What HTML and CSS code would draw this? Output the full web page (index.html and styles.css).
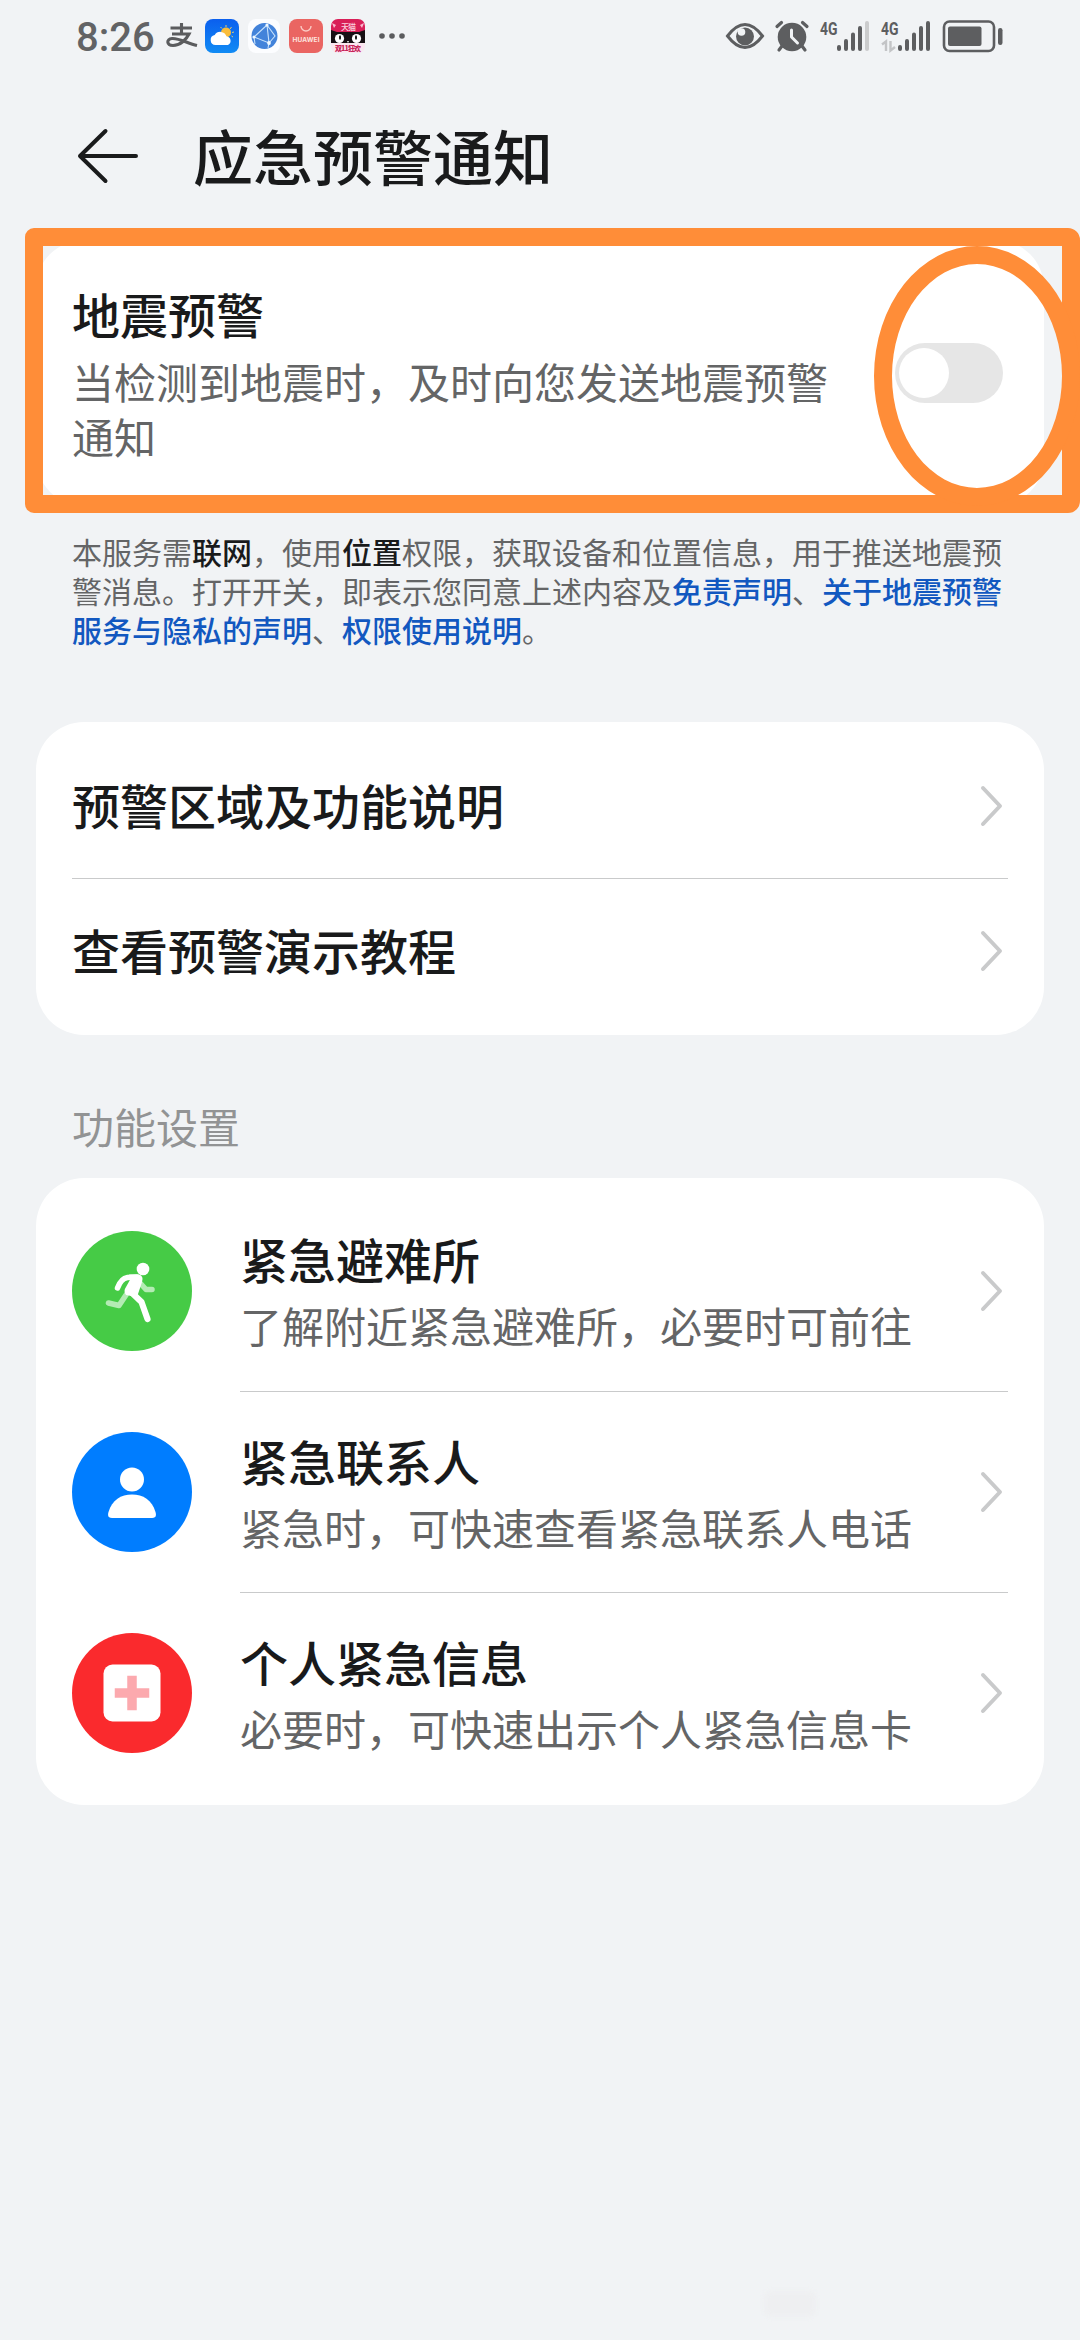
FILE: index.html
```html
<!DOCTYPE html>
<html lang="zh-CN">
<head>
<meta charset="utf-8">
<title>应急预警通知</title>
<link rel="stylesheet" href="styles.css">
</head>
<body>
<div class="screen">
  <div class="status">
    <span class="clock">8:26</span>
    <svg class="pay" width="32" height="28" viewBox="0 0 32 28" fill="none" stroke="#5b5c5e" stroke-width="3.100"><path d="M4.500 6H26M15.500 1V11.500M6 12H23C20 18 14 23.500 7 23.500C0.500 23.500 0 17 6 16.500C13 16 21 21 31 23.500"/></svg>
    <svg class="app" width="34" height="34" viewBox="0 0 34 34">
      <defs><linearGradient id="sky" x1="0" y1="0" x2="0" y2="1"><stop offset="0" stop-color="#0b5fee"/><stop offset="1" stop-color="#118bf4"/></linearGradient></defs>
      <rect width="34" height="34" rx="8" fill="url(#sky)"/>
      <path d="M21 6V8M26.500 8L25 10M29 13L27 13.500M15.500 8L17 9.500M28 18L26.500 17" stroke="#e9ca6b" stroke-width="1"/>
      <circle cx="21" cy="13.500" r="5" fill="#f9bd3c"/>
      <path d="M10.500 26a5 5 0 0 1-.8-9.900 6.500 6.500 0 0 1 11.800 1.200 4.600 4.600 0 0 1 1.500 8.700z" fill="#fff"/>
    </svg>
    <svg class="app" width="34" height="34" viewBox="0 0 34 34">
      <rect x="1" width="32" height="34" rx="8" fill="#fcfdff"/>
      <circle cx="17.500" cy="17" r="13" fill="#4383da"/>
      <g fill="none" stroke="#c8e2fc" stroke-width="1.100"><path d="M20 6L7 18L22 24ZM20 6L28 17L22 24M7 18L8 25M22 24L21 29"/></g>
      <g fill="#eff8ff"><circle cx="20" cy="6" r="1.600"/><circle cx="7" cy="18" r="1.600"/><circle cx="22" cy="24" r="1.900"/></g>
    </svg>
    <svg class="app" width="34" height="34" viewBox="0 0 34 34">
      <rect width="34" height="34" rx="8" fill="#ea6562"/>
      <path d="M12 7a5 5 0 0 0 10 0" fill="none" stroke="#fbcac4" stroke-width="1.400"/>
      <text x="3.500" y="22.500" textLength="27" class="brand">HUAWEI</text>
    </svg>
    <svg class="app" width="34" height="34" viewBox="0 0 34 34">
      <rect width="34" height="34" rx="7" fill="#fbe6ef"/>
      <path d="M0 13V7a7 7 0 0 1 7-7H27a7 7 0 0 1 7 7V13Z" fill="#d91f58"/>
      <path d="M3 9L1 4L5 6ZM31 9L33 4L29 6Z" fill="#f9b9cd"/>
      <path d="M0 11L6 13H28L34 11V24H0Z" fill="#171014"/>
      <circle cx="8.500" cy="19.500" r="4.600" fill="#fff"/><circle cx="25.500" cy="19.500" r="4.600" fill="#fff"/>
      <ellipse cx="9" cy="18.500" rx="1" ry="2.300" fill="#111"/><ellipse cx="25" cy="18.500" rx="1" ry="2.300" fill="#111"/>
      <path d="M16 22h2l-1 2z" fill="#fff"/>
      <text x="10" y="10.500" textLength="15" class="cat-top">天猫</text>
      <text x="4" y="32" textLength="26" class="cat-bottom">双11狂欢</text>
    </svg>
    <svg class="more" width="28" height="8" viewBox="0 0 28 8" fill="#5b5c5e"><circle cx="4" cy="4" r="2.800"/><circle cx="14" cy="4" r="2.800"/><circle cx="24" cy="4" r="2.800"/></svg>
    <svg class="tray" width="280" height="36" viewBox="724 18 280 36">
      <path d="M726.500 36Q744 13 761.500 36Q744 59 726.500 36Z" fill="none" stroke="#5d5e60" stroke-width="3"/>
      <circle cx="744" cy="36.500" r="9" fill="#5d5e60"/><circle cx="740.500" cy="32" r="3.800" fill="#f1f3f5"/>
      <circle cx="791" cy="37" r="14.300" fill="#5d5e60"/>
      <path d="M776 26.500L780.500 22.500M806 26.500L801.500 22.500M781 46L778 50M801 46L804 50" stroke="#5d5e60" stroke-width="3.200" stroke-linecap="round"/>
      <path d="M790.500 30V37L796.500 43" fill="none" stroke="#f1f3f5" stroke-width="3" stroke-linecap="round" stroke-linejoin="round"/>
      <text x="819" y="34.500" textLength="17.500" lengthAdjust="spacingAndGlyphs" class="net">4G</text>
      <g stroke="#5d5e60" stroke-width="4" stroke-linecap="round"><path d="M838 47V49M845 41V49M852 34.500V49M859 28V49"/><path d="M866 23V49" stroke="#cbcccd"/></g>
      <text x="880" y="34.500" textLength="17.500" lengthAdjust="spacingAndGlyphs" class="net">4G</text>
      <path d="M881 44.500L885 41.500V51M889.500 41V50.500L894 47" fill="none" stroke="#c3c4c6" stroke-width="2.400"/>
      <path d="M899 47V49M906 41V49M913 34.500V49M920 28V49M927 23V49" stroke="#5d5e60" stroke-width="4" stroke-linecap="round"/>
      <rect x="943" y="21.500" width="50" height="29.500" rx="5.500" fill="none" stroke="#5d5e60" stroke-width="2.600"/>
      <rect x="947" y="26.500" width="33.500" height="19.500" rx="2" fill="#5d5e60"/>
      <rect x="997" y="28" width="4.500" height="17" rx="2.200" fill="#5d5e60"/>
    </svg>
  </div>

  <header class="header">
    <svg width="62" height="56" viewBox="0 0 62 56" fill="none" stroke="#1a1b1c" stroke-width="4" stroke-linecap="round" stroke-linejoin="round"><path d="M59 28H3M28.500 3L3 28L28.500 53"/></svg>
    <h1>应急预警通知</h1>
  </header>

  <section class="card quake">
    <div class="quake-text">
      <h2>地震预警</h2>
      <p>当检测到地震时，及时向您发送地震预警通知</p>
    </div>
    <span class="switch"><span class="knob"></span></span>
    <span class="mark-box"></span>
    <span class="mark-ring"></span>
  </section>

  <p class="notice">本服务需<b>联网</b>，使用<b>位置</b>权限，获取设备和位置信息，用于推送地震预警消息。打开开关，即表示您同意上述内容及<a>免责声明</a>、<a>关于地震预警服务与隐私的声明</a>、<a>权限使用说明</a>。</p>

  <section class="card links">
    <div class="row"><h2>预警区域及功能说明</h2><svg class="chev" width="24" height="42" viewBox="0 0 24 42"><path d="M3 3L20 21L3 39"/></svg></div>
    <div class="row ruled"><h2>查看预警演示教程</h2><svg class="chev" width="24" height="42" viewBox="0 0 24 42"><path d="M3 3L20 21L3 39"/></svg></div>
  </section>

  <h3 class="label">功能设置</h3>

  <section class="card features">
    <div class="feature">
      <svg width="120" height="120" viewBox="0 0 120 120"><circle cx="60" cy="60" r="60" fill="#46cb46"/>
        <g fill="none" stroke-linecap="round" stroke-linejoin="round"><path d="M54 64L47 74.500L36.500 72M69 53L74 58.500H80" stroke="#b4ebb4" stroke-width="5.500"/><path d="M65 46L55.500 46.500Q49 47.500 45.500 57" stroke="#fff" stroke-width="5.500"/><path d="M59 61L69.500 71L75.500 88" stroke="#fff" stroke-width="6.200"/></g>
        <path d="M57 43.500H67Q72 45 70 51L65 66L54 64Q51 60 54 56L59 47Z" fill="#fff"/><circle cx="71" cy="38" r="6.300" fill="#fff"/></svg>
      <div class="body"><div class="words"><h2>紧急避难所</h2><p>了解附近紧急避难所，必要时可前往</p></div><svg class="chev" width="24" height="42" viewBox="0 0 24 42"><path d="M3 3L20 21L3 39"/></svg></div>
    </div>
    <div class="feature">
      <svg width="120" height="120" viewBox="0 0 120 120"><circle cx="60" cy="60" r="60" fill="#007dff"/><g fill="#fff"><circle cx="60" cy="47.500" r="12"/><path d="M40 86C35 86 36 82 36.500 80C40 68 49 62.500 60 62.500S80 68 83.500 80C84 82 85 86 80 86Z"/></g></svg>
      <div class="body ruled"><div class="words"><h2>紧急联系人</h2><p>紧急时，可快速查看紧急联系人电话</p></div><svg class="chev" width="24" height="42" viewBox="0 0 24 42"><path d="M3 3L20 21L3 39"/></svg></div>
    </div>
    <div class="feature">
      <svg width="120" height="120" viewBox="0 0 120 120"><circle cx="60" cy="60" r="60" fill="#fa2a2d"/><rect x="31.500" y="31.500" width="57" height="57" rx="9" fill="#fff"/><path d="M60 47.500V72.500M47.500 60H72.500" stroke="#fca9ae" stroke-width="9.500" stroke-linecap="square"/></svg>
      <div class="body ruled"><div class="words"><h2>个人紧急信息</h2><p>必要时，可快速出示个人紧急信息卡</p></div><svg class="chev" width="24" height="42" viewBox="0 0 24 42"><path d="M3 3L20 21L3 39"/></svg></div>
    </div>
  </section>
  <div class="smudge"></div>
</div>
</body>
</html>
```
FILE: styles.css
```css
* { box-sizing: border-box; margin: 0; padding: 0; }
body { background: #f1f3f5; }
.screen {
  width: 1080px; height: 2340px; overflow: hidden;
  display: flex; flex-direction: column;
  background: #f1f3f5; color: #191a1b;
  font-family: "Noto Sans CJK SC", sans-serif;
}
h1, h2 { font-weight: 500; white-space: nowrap; }
h2 { font-size: 48px; line-height: 64px; }
p { color: #646566; }

.status { height: 72px; display: flex; align-items: center; padding: 0 75px 0 76px; }
.clock { width: 90px; font: 500 40px/72px Roboto, sans-serif; color: #626365; padding-top: 4px; }
.pay { margin-right: 7px; }
.app { margin-right: 8px; }
.more { margin-left: 5px; }
.tray { margin-left: auto; }
.brand { font: 700 6.500px Inter, sans-serif; fill: #fde3df; }
.cat-top { font: 500 8px "Noto Sans CJK SC", sans-serif; fill: #fbd1df; }
.cat-bottom { font: 900 7px "Noto Sans CJK SC", sans-serif; fill: #c72358; }
.net { font: 700 18px Roboto, sans-serif; fill: #5d5e60; }

.header { height: 168px; padding: 0 77px 0; display: flex; align-items: center; gap: 54px; }
.header h1 { font-size: 60px; line-height: 78px; padding-bottom: 2px; }

.card { margin: 0 36px; background: #fff; border-radius: 48px; flex: none; }
.quake { position: relative; height: 266px; padding: 0 41px 0 36px; display: flex; align-items: center; justify-content: space-between; }
.quake-text { width: 762px; padding-bottom: 2px; }
.quake-text p { font-size: 42px; line-height: 55px; margin-top: 8px; }
.switch { width: 108px; height: 60px; border-radius: 30px; background: #e6e6e6; padding: 5px 4px; }
.knob { display: block; width: 50px; height: 50px; border-radius: 50%; background: #fff; }
/* highlight strokes drawn over the card */
.mark-box { position: absolute; left: -11px; top: -12px; width: 1055px; height: 285px; border: 18px solid #ff8d38; border-radius: 9px 12px 12px 9px; }
.mark-ring { position: absolute; left: 838px; top: 6px; width: 206px; height: 260px; border: 18px solid #ff8d38; border-radius: 50%; }

.notice { margin: 26px 72px 0; width: 936px; font-size: 30px; line-height: 39px; }
.notice b { font-weight: 500; color: #191a1b; }
.notice a { font-weight: 500; color: #1258c0; }

.links { margin-top: 73px; padding: 12px 36px; }
.row { height: 144px; display: flex; align-items: center; justify-content: space-between; padding-right: 4px; }
.row h2 { padding-bottom: 4px; }
.row.ruled { height: 145px; }
.ruled { border-top: 1px solid #c9cacb; }
.chev { fill: none; stroke: #c9cacb; stroke-width: 4; stroke-linecap: round; stroke-linejoin: round; flex: none; }

.label { margin: 63px 72px 0; font-size: 42px; line-height: 56px; font-weight: 400; color: #929394; }

.features { margin-top: 24px; padding: 12px 36px; }
.feature { display: flex; align-items: center; gap: 48px; height: 201px; }
.body { flex: 1; height: 201px; padding-right: 4px; display: flex; align-items: center; justify-content: space-between; }
.words { padding-bottom: 2px; }
.words p { font-size: 42px; line-height: 56px; margin-top: 7px; white-space: nowrap; }
.smudge { margin: 486px 0 0 764px; width: 52px; height: 26px; flex: none; border-radius: 8px; background: #eeeff1; filter: blur(2px); }
```
